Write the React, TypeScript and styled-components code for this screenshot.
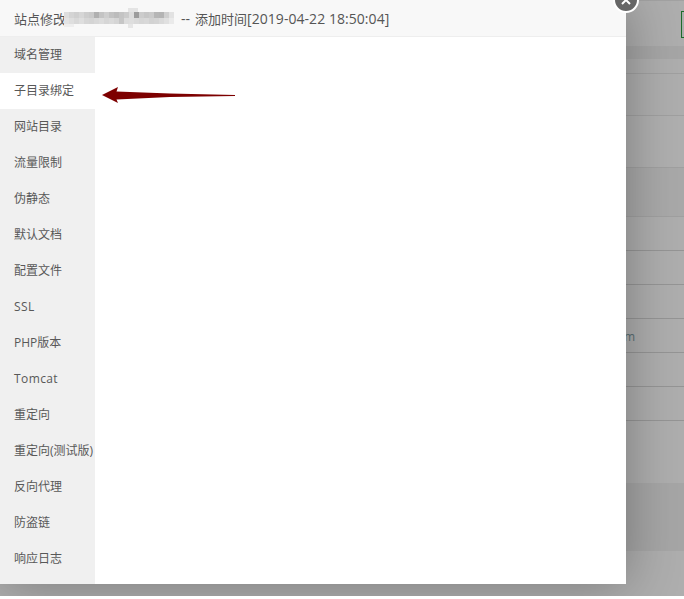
import React from 'react';
import styled, { createGlobalStyle } from 'styled-components';

const GlobalStyle = createGlobalStyle`
  html, body {
    margin: 0;
    padding: 0;
    height: 100%;
    overflow: hidden;
    background: #ffffff;
    font-family: "Open Sans", "Noto Sans CJK SC", sans-serif;
  }
`;

const Page = styled.div`
  position: relative;
  height: 596px;
  overflow: hidden;
  background: #aeaeae;
  display: flex;
  flex-direction: column;
`;

const PageRow = styled.div<{ $height: number; $tone?: string; $line?: string }>`
  box-sizing: border-box;
  height: ${({ $height }) => $height}px;
  flex: none;
  background: ${({ $tone }) => $tone ?? '#aeaeae'};
  border-bottom: ${({ $line }) => ($line ? `1px solid ${$line}` : '0')};
  display: flex;
  align-items: center;
  justify-content: flex-end;
`;

const TopRow = styled(PageRow)`
  border-top: 1px solid #a2a2a2;
  padding-top: 10px;
  align-items: flex-start;
`;

const GreenBox = styled.div`
  box-sizing: border-box;
  width: 3px;
  height: 27px;
  border: 1px solid #1f6b2a;
  border-right: 0;
`;

const HiddenText = styled.span`
  font-size: 12px;
  color: #5c7074;
  margin-right: 49px;
  padding-top: 2px;
`;

const Modal = styled.div`
  position: absolute;
  top: 0;
  left: 0;
  width: 626px;
  height: 584px;
  background: #ffffff;
  box-shadow: 1px 1px 50px rgba(0, 0, 0, 0.3);
  display: flex;
  flex-direction: column;
`;

const Header = styled.div`
  box-sizing: border-box;
  flex: none;
  height: 37px;
  padding-left: 14px;
  background: #f8f8f8;
  border-bottom: 1px solid #eeeeee;
  display: flex;
  align-items: center;
  font-size: 13px;
  color: #555555;
  white-space: nowrap;
`;

const Dashes = styled.span`
  font-size: 14px;
  margin-right: 5px;
`;

const AddedAt = styled.span`
  font-size: 14px;
  letter-spacing: 0.05px;
`;

const Mosaic = styled.svg`
  flex: none;
  display: block;
  margin: 0 7px 0 -4px;
`;

const CloseButton = styled.div`
  box-sizing: border-box;
  position: absolute;
  top: -13px;
  right: -13px;
  width: 26px;
  height: 26px;
  border-radius: 50%;
  background: #666666;
  border: 2px solid #ffffff;
  display: flex;
  align-items: center;
  justify-content: center;
`;

const Body = styled.div`
  flex: 1;
  display: flex;
  min-height: 0;
`;

const Sidebar = styled.div`
  flex: none;
  width: 95px;
  background: #f0f0f0;
`;

const SideItem = styled.div<{ $active?: boolean; $spacing?: number }>`
  height: 36px;
  line-height: 36px;
  padding-left: 14px;
  font-size: 12px;
  color: #585858;
  white-space: nowrap;
  letter-spacing: ${({ $spacing }) => $spacing ?? 0}px;
  background: ${({ $active }) => ($active ? '#ffffff' : 'transparent')};
`;

const Arrow = styled.svg`
  position: absolute;
  top: 85px;
  left: 100px;
`;

const rows = [
  { height: 13, tone: '#a6a6a6' },
  { height: 15, line: '#a0a0a0' },
  { height: 42, line: '#a0a0a0' },
  { height: 52, line: '#a0a0a0', tone: '#afafaf' },
  { height: 49, line: '#a0a0a0', tone: '#a9a9a9' },
  { height: 34, line: '#959595' },
  { height: 34, line: '#959595' },
  { height: 34, line: '#959595' },
  { height: 34, line: '#959595', text: 'm' },
  { height: 34, line: '#959595' },
  { height: 34, line: '#959595' },
  { height: 62 },
  { height: 68, tone: '#a6a6a6' },
  { height: 45 },
];

const menu = [
  { label: '域名管理' },
  { label: '子目录绑定' },
  { label: '网站目录' },
  { label: '流量限制' },
  { label: '伪静态' },
  { label: '默认文档' },
  { label: '配置文件' },
  { label: 'SSL', spacing: 0.4 },
  { label: 'PHP版本' },
  { label: 'Tomcat', spacing: 0.4 },
  { label: '重定向' },
  { label: '重定向(测试版)' },
  { label: '反向代理' },
  { label: '防盗链' },
  { label: '响应日志' },
];

// blurred domain name, two lines of 5px blocks
const mosaicTop = ['#dedede', '#d4d4d4', '#cfcfcf', '#d6d6d6', '#cdcdcd', '#c9c9c9', '#b0b0b0', '#c4c4c4', '#cecece', '#c2c2c2', '#bcbcbc', '#c4c4c4', '#cbcbcb', '#dcdcdc', '#9c9c9c', '#cccccc', '#c6c6c6', '#cacaca', '#b6b6b6', '#b4b4b4', '#cfcfcf', '#e2e2e2'];
const mosaicBottom = ['#e4e4e4', '#dedede', '#d8d8d8', '#dedede', '#d6d6d6', '#d4d4d4', '#d8d8d8', '#dcdcdc', '#d6d6d6', '#dadada', '#d5d5d5', '#c6c6c6', '#dcdcdc', '#dedede', '#dadada', '#d6d6d6', '#d8d8d8', '#d2d2d2', '#d4d4d4', '#dadada', '#e0e0e0', '#eaeaea'];

export default function App() {
  return (
    <>
      <GlobalStyle />
      <Page>
        <TopRow $height={46}>
          <GreenBox />
        </TopRow>
        {rows.map((row, i) => (
          <PageRow key={i} $height={row.height} $tone={row.tone} $line={row.line}>
            {row.text && <HiddenText>{row.text}</HiddenText>}
          </PageRow>
        ))}
        <Modal>
          <Header>
            站点修改
            <Mosaic width="112" height="20" viewBox="0 0 112 20">
              {mosaicTop.map((c, i) => (
                <rect key={i} x={i * 5 + 2} y="4" width="5" height="6" fill={c} />
              ))}
              {mosaicBottom.map((c, i) => (
                <rect key={i} x={i * 5 + 2} y="10" width="5" height="6" fill={c} />
              ))}
              <rect x="66" y="0" width="10" height="4" fill="#e4e4e4" />
              <rect x="66" y="16" width="5" height="4" fill="#e6e6e6" />
              <rect x="2" y="16" width="10" height="3" fill="#eeeeee" />
            </Mosaic>
            <Dashes>--</Dashes>
            添加时间<AddedAt>[2019-04-22 18:50:04]</AddedAt>
          </Header>
          <Body>
            <Sidebar>
              {menu.map((item, i) => (
                <SideItem key={item.label} $active={i === 1} $spacing={item.spacing}>
                  {item.label}
                </SideItem>
              ))}
            </Sidebar>
          </Body>
          <CloseButton>
            <svg width="12" height="12" viewBox="0 0 12 12">
              <path d="M2 2l8 8M10 2l-8 8" stroke="#ffffff" strokeWidth="2" fill="none" />
            </svg>
          </CloseButton>
          <Arrow width="136" height="20" viewBox="0 0 136 20">
            <path d="M2 10 L18 2 L16.5 6.5 L70 8.6 L135 10 L135 11 L70 12 L16.5 14.5 L18 18 Z" fill="#7d0000" />
          </Arrow>
        </Modal>
      </Page>
    </>
  );
}
